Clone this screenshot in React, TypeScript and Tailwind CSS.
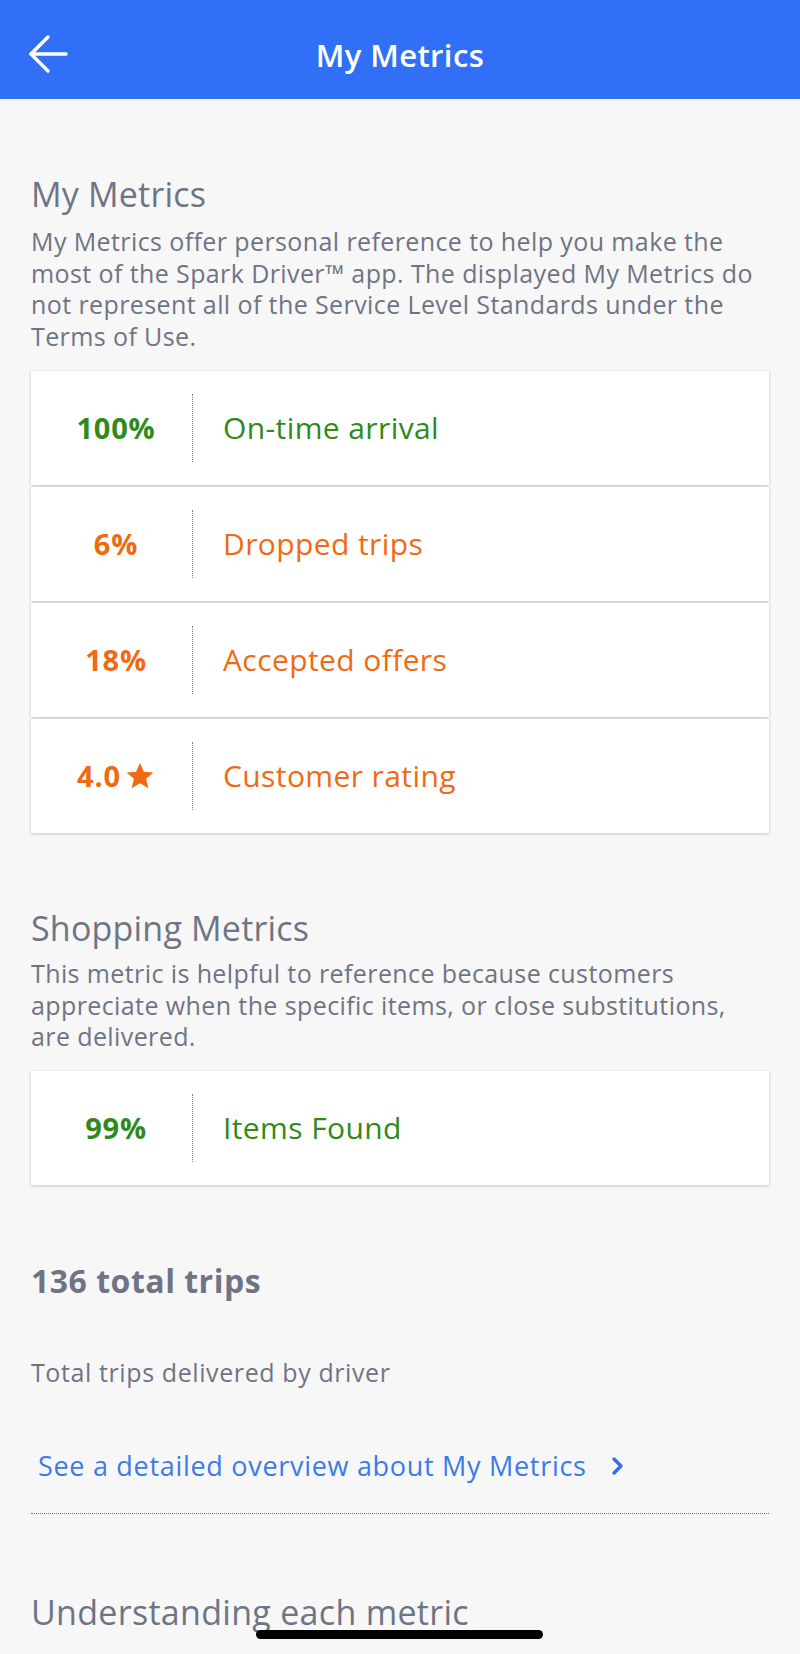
const metrics = [
  { value: "100%", label: "On-time arrival", tone: "green" },
  { value: "6%", label: "Dropped trips", tone: "orange" },
  { value: "18%", label: "Accepted offers", tone: "orange" },
  { value: "4.0", label: "Customer rating", tone: "orange", star: true },
];

const toneClass = (tone: string) =>
  tone === "green" ? "text-[#2f8a1a]" : "text-[#ef6a12]";

function MetricRow({ value, label, tone, star }: { value: string; label: string; tone: string; star?: boolean }) {
  return (
    <div className="flex h-[114px] items-center bg-white shadow-[0_1px_3px_rgba(0,0,0,0.22)]">
      <div className={`flex w-[161px] items-center justify-center gap-[4px] pl-[9px] text-[29px] font-bold tracking-[0.8px] ${toneClass(tone)}`}>
        <span>{value}</span>
        {star && (
          <svg width="30" height="30" viewBox="0 0 24 24" className="fill-current">
            <path d="M12 1.5l3.1 7.1 7.6.6-5.8 5 1.8 7.5L12 17.7l-6.7 4 1.8-7.5-5.8-5 7.6-.6z" />
          </svg>
        )}
      </div>
      <div className="h-[68px] border-l border-dotted border-[#7d7d7d]" />
      <div className={`pl-[30px] text-[30px] tracking-[0.4px] ${toneClass(tone)}`}>{label}</div>
    </div>
  );
}

export default function App() {
  return (
    <div
      className="relative min-h-[1654px] bg-[#f7f7f7] text-[#6f7485]"
      style={{ fontFamily: '"Open Sans", "Liberation Sans", sans-serif' }}
    >
      {/* top bar */}
      <header className="relative flex h-[99px] items-center justify-center bg-[#3170f6] pt-[12px]">
        <button className="absolute left-[28px] top-[34px]">
          <svg width="40" height="40" viewBox="0 0 40 40" fill="none" stroke="white" strokeWidth="3.4" strokeLinecap="round" strokeLinejoin="round">
            <path d="M38 20H3" />
            <path d="M20 3L3 20l17 17" />
          </svg>
        </button>
        <h1 className="text-[31px] font-semibold tracking-[0.4px] text-white">My Metrics</h1>
      </header>

      <main className="px-[31px] pb-[40px]">
        <section className="pt-[75px]">
          <h2 className="text-[34px] leading-[40px] tracking-[0.2px]">My Metrics</h2>
          <p className="mt-[12px] text-[25px] leading-[31.7px] tracking-[0.4px]">
            My Metrics offer personal reference to help you make the most of the Spark Driver™ app. The displayed My Metrics do not represent all of the Service Level Standards under the Terms of Use.
          </p>
          <div className="mt-[18px] flex flex-col gap-[2px]">
            {metrics.map((m) => (
              <MetricRow key={m.label} {...m} />
            ))}
          </div>
        </section>

        <section className="pt-[75px]">
          <h2 className="text-[34px] leading-[40px] tracking-[0.2px]">Shopping Metrics</h2>
          <p className="mt-[10px] text-[25px] leading-[31.7px] tracking-[0.4px]">
            This metric is helpful to reference because customers appreciate when the specific items, or close substitutions, are delivered.
          </p>
          <div className="mt-[18px]">
            <MetricRow value="99%" label="Items Found" tone="green" />
          </div>
        </section>

        <section className="pt-[76px]">
          <h3 className="text-[32px] font-bold leading-[40px] tracking-[0.5px]">136 total trips</h3>
          <p className="mt-[56px] text-[25px] leading-[30px] tracking-[0.6px]">Total trips delivered by driver</p>
          <a className="mt-[62px] flex items-center gap-[24px] pl-[7px] text-[27px] leading-[34px] tracking-[0.7px] text-[#3b7be9]">
            <span>See a detailed overview about My Metrics</span>
            <svg width="14" height="20" viewBox="0 0 14 20" fill="none" stroke="#2f73e8" strokeWidth="3.4" strokeLinecap="round" strokeLinejoin="round">
              <path d="M3 3l7 7-7 7" />
            </svg>
          </a>
          <div className="mt-[30px] border-t border-dotted border-[#6f6f6f]" />
          <h2 className="mt-[78px] text-[34px] leading-[40px] tracking-[0.3px]">Understanding each metric</h2>
        </section>
      </main>

      {/* home indicator */}
      <div className="absolute left-[256px] top-[1630px] h-[9px] w-[287px] rounded-full bg-black" />
    </div>
  );
}
